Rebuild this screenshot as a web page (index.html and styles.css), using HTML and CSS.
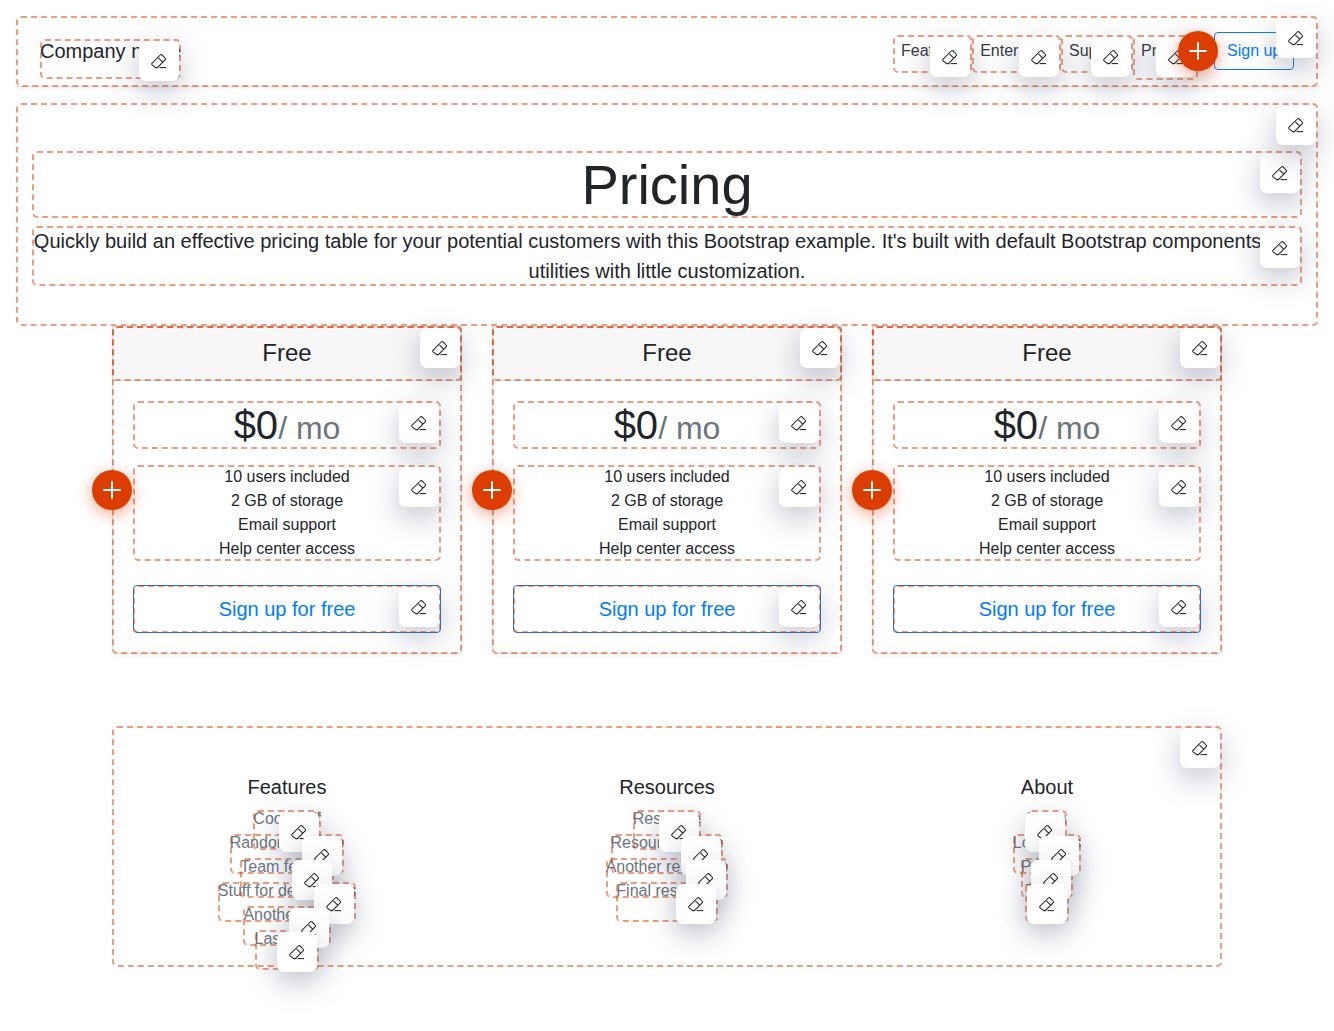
FILE: index.html
```html
<!DOCTYPE html>
<html lang="en">
<head>
    <meta charset="utf-8">
    <title>Pricing</title>
    <link rel="stylesheet" href="styles.css">
</head>
<body>
    <svg class="defs" width="0" height="0">
        <symbol id="pen" viewBox="0 0 16 16">
            <path d="M1.1 10.2 9.3 2a1.3 1.3 0 0 1 1.8 0l3 3a1.3 1.3 0 0 1 0 1.8L6.4 14.6H4.9L1.1 11.8a1.2 1.2 0 0 1 0-1.6Z" fill="none" stroke="currentColor" stroke-width="1.05"/>
            <path d="M7.4 4.9 11.7 9.2" fill="none" stroke="currentColor" stroke-width="1.05"/>
            <path d="M8.6 14.6H15" fill="none" stroke="currentColor" stroke-width="1.05"/>
        </symbol>
    </svg>

    <header class="ed topbar">
        <div class="ed brand">Company name<span class="pen"><svg><use href="#pen"/></svg></span></div>
        <nav class="topnav">
            <a class="ed nav-item">Features<span class="pen"><svg><use href="#pen"/></svg></span></a>
            <a class="ed nav-item">Enterprise<span class="pen"><svg><use href="#pen"/></svg></span></a>
            <a class="ed nav-item">Support<span class="pen"><svg><use href="#pen"/></svg></span></a>
            <a class="ed nav-item tall">Pricing<span class="pen"><svg><use href="#pen"/></svg></span></a>
        </nav>
        <a class="signup">Sign up</a>
        <span class="plus plus-top"></span>
        <span class="pen"><svg><use href="#pen"/></svg></span>
    </header>

    <section class="ed hero">
        <h1 class="ed hero-title">Pricing<span class="pen"><svg><use href="#pen"/></svg></span></h1>
        <p class="ed hero-lead">Quickly build an effective pricing table for your potential customers with this Bootstrap example. It's built with default Bootstrap components and utilities with little customization.<span class="pen"><svg><use href="#pen"/></svg></span></p>
        <span class="pen"><svg><use href="#pen"/></svg></span>
    </section>

    <main class="cards">
        <article class="ed card">
            <span class="plus plus-card"></span>
            <h4 class="ed card-head">Free<span class="pen"><svg><use href="#pen"/></svg></span></h4>
            <div class="card-body">
                <div class="ed price"><b>$0</b><small>/ mo</small><span class="pen"><svg><use href="#pen"/></svg></span></div>
                <div class="ed perks">
                    <ul>
                        <li>10 users included</li>
                        <li>2 GB of storage</li>
                        <li>Email support</li>
                        <li>Help center access</li>
                    </ul>
                    <span class="pen"><svg><use href="#pen"/></svg></span>
                </div>
                <a class="ed cta">Sign up for free<span class="pen"><svg><use href="#pen"/></svg></span></a>
            </div>
        </article>
        <article class="ed card">
            <span class="plus plus-card"></span>
            <h4 class="ed card-head">Free<span class="pen"><svg><use href="#pen"/></svg></span></h4>
            <div class="card-body">
                <div class="ed price"><b>$0</b><small>/ mo</small><span class="pen"><svg><use href="#pen"/></svg></span></div>
                <div class="ed perks">
                    <ul>
                        <li>10 users included</li>
                        <li>2 GB of storage</li>
                        <li>Email support</li>
                        <li>Help center access</li>
                    </ul>
                    <span class="pen"><svg><use href="#pen"/></svg></span>
                </div>
                <a class="ed cta">Sign up for free<span class="pen"><svg><use href="#pen"/></svg></span></a>
            </div>
        </article>
        <article class="ed card">
            <span class="plus plus-card"></span>
            <h4 class="ed card-head">Free<span class="pen"><svg><use href="#pen"/></svg></span></h4>
            <div class="card-body">
                <div class="ed price"><b>$0</b><small>/ mo</small><span class="pen"><svg><use href="#pen"/></svg></span></div>
                <div class="ed perks">
                    <ul>
                        <li>10 users included</li>
                        <li>2 GB of storage</li>
                        <li>Email support</li>
                        <li>Help center access</li>
                    </ul>
                    <span class="pen"><svg><use href="#pen"/></svg></span>
                </div>
                <a class="ed cta">Sign up for free<span class="pen"><svg><use href="#pen"/></svg></span></a>
            </div>
        </article>
    </main>

    <footer class="ed foot">
        <div class="foot-col">
            <h5>Features</h5>
            <ul>
                <li><a class="ed link">Cool stuff<span class="pen"><svg><use href="#pen"/></svg></span></a></li>
                <li><a class="ed link">Random feature<span class="pen"><svg><use href="#pen"/></svg></span></a></li>
                <li><a class="ed link">Team feature<span class="pen"><svg><use href="#pen"/></svg></span></a></li>
                <li><a class="ed link">Stuff for developers<span class="pen"><svg><use href="#pen"/></svg></span></a></li>
                <li><a class="ed link">Another one<span class="pen"><svg><use href="#pen"/></svg></span></a></li>
                <li><a class="ed link">Last time<span class="pen"><svg><use href="#pen"/></svg></span></a></li>
            </ul>
        </div>
        <div class="foot-col">
            <h5>Resources</h5>
            <ul>
                <li><a class="ed link">Resource<span class="pen"><svg><use href="#pen"/></svg></span></a></li>
                <li><a class="ed link">Resource name<span class="pen"><svg><use href="#pen"/></svg></span></a></li>
                <li><a class="ed link">Another resource<span class="pen"><svg><use href="#pen"/></svg></span></a></li>
                <li><a class="ed link">Final resource<span class="pen"><svg><use href="#pen"/></svg></span></a></li>
            </ul>
        </div>
        <div class="foot-col">
            <h5>About</h5>
            <ul>
                <li><a class="ed link">Team<span class="pen"><svg><use href="#pen"/></svg></span></a></li>
                <li><a class="ed link">Locations<span class="pen"><svg><use href="#pen"/></svg></span></a></li>
                <li><a class="ed link">Privacy<span class="pen"><svg><use href="#pen"/></svg></span></a></li>
                <li><a class="ed link">Terms<span class="pen"><svg><use href="#pen"/></svg></span></a></li>
            </ul>
        </div>
        <span class="pen"><svg><use href="#pen"/></svg></span>
    </footer>
</body>
</html>
```
FILE: styles.css
```css
* {
    margin: 0;
    padding: 0;
    box-sizing: border-box;
}
html, body {
    height: 100%;
    overflow: hidden;
}
body {
    padding-top: 16px;
    background: #fff;
    color: #212529;
    font-family: "Liberation Sans", Arial, sans-serif;
    font-size: 16px;
    line-height: 24px;
}
ul {
    list-style: none;
}
.defs {
    position: absolute;
}

/* editor outline + floating buttons */
.ed {
    position: relative;
}
.ed::before {
    content: "";
    position: absolute;
    inset: 0;
    z-index: 2;
    border: 2px dashed rgba(220, 61, 0, 0.5);
    border-radius: 5px;
    pointer-events: none;
}
.pen {
    position: absolute;
    top: 2px;
    right: 2px;
    z-index: 3;
    display: flex;
    align-items: center;
    justify-content: center;
    width: 40px;
    height: 40px;
    background: #fff;
    color: #212529;
    border-radius: 7px;
    box-shadow: 0 10px 30px rgba(90, 100, 125, 0.4);
}
.pen svg {
    width: 16px;
    height: 16px;
}
.plus {
    position: absolute;
    z-index: 5;
    width: 40px;
    height: 40px;
    border-radius: 50%;
    background: #dc3d00;
    box-shadow: 0 4px 16px rgba(220, 61, 0, 0.45);
}
.plus::before, .plus::after {
    content: "";
    position: absolute;
    left: 11px;
    top: 19px;
    width: 18px;
    height: 2px;
    border-radius: 1px;
    background: #fff;
}
.plus::after {
    transform: rotate(90deg);
}
.plus-top {
    top: 15px;
    left: 1162px;
}
.plus-card {
    top: 144px;
    left: -20px;
}

/* top bar */
.topbar {
    display: flex;
    align-items: flex-start;
    height: 71px;
    margin: 0 16px;
    padding: 16px 24px 0;
    box-shadow: inset 0 -1px rgba(0, 0, 0, 0.125), 0 2px 4px rgba(0, 0, 0, 0.05);
}
.brand {
    width: 141px;
    height: 40px;
    margin-top: 7px;
    font-size: 20px;
    white-space: nowrap;
}
.topnav {
    display: flex;
    margin: 3px 16px 0 auto;
}
.nav-item {
    display: block;
    height: 38px;
    padding: 4px 8px 0;
    color: #343a40;
    white-space: nowrap;
}
.tall {
    height: 45px;
}
.signup {
    display: block;
    width: 80px;
    height: 38px;
    padding: 6px 12px;
    color: #007bff;
    border: 1px solid #007bff;
    border-radius: 4px;
    white-space: nowrap;
    overflow: hidden;
}

/* hero */
.hero {
    height: 223px;
    margin: 16px 16px 0;
    padding: 48px 16px 0;
    text-align: center;
}
.hero-title {
    height: 67px;
    font-size: 56px;
    font-weight: 400;
    line-height: 67px;
}
.hero-lead {
    height: 60px;
    margin-top: 8px;
    font-size: 20px;
    line-height: 30px;
}

/* cards */
.cards {
    display: grid;
    grid-template-columns: repeat(3, 350px);
    gap: 30px;
    width: 1110px;
    margin: 0 auto;
}
.card {
    height: 328px;
    text-align: center;
    border-radius: 4px;
    box-shadow: inset 0 0 0 1px rgba(0, 0, 0, 0.125), 0 2px 4px rgba(0, 0, 0, 0.05);
}
.card-head {
    height: 55px;
    background: #f7f7f7;
    font-size: 24px;
    font-weight: 400;
    line-height: 53px;
    box-shadow: inset 0 0 0 1px rgba(0, 0, 0, 0.125);
}
.card-body {
    padding: 20px 21px 0;
}
.price {
    height: 48px;
    line-height: 48px;
}
.price b {
    font-size: 40px;
    font-weight: 400;
}
.price small {
    font-size: 32px;
    color: #6c757d;
}
.perks {
    height: 96px;
    margin-top: 16px;
}
.cta {
    display: block;
    height: 48px;
    margin-top: 24px;
    color: #007bff;
    font-size: 20px;
    line-height: 46px;
    border: 1px solid #007bff;
    border-radius: 4px;
}
.cta::before {
    inset: -1px;
}
.cta .pen {
    top: 1px;
    right: 1px;
}

/* footer */
.foot {
    display: grid;
    grid-template-columns: repeat(3, 350px);
    gap: 30px;
    width: 1110px;
    height: 241px;
    margin: 72px auto 0;
    padding-top: 49px;
    text-align: center;
}
.foot-col h5 {
    height: 35px;
    font-size: 20px;
    font-weight: 400;
    line-height: 24px;
}
.foot-col li {
    height: 24px;
}
.link {
    display: inline-block;
    height: 40px;
    color: #6c757d;
    line-height: 18px;
    white-space: nowrap;
    vertical-align: top;
}
```
